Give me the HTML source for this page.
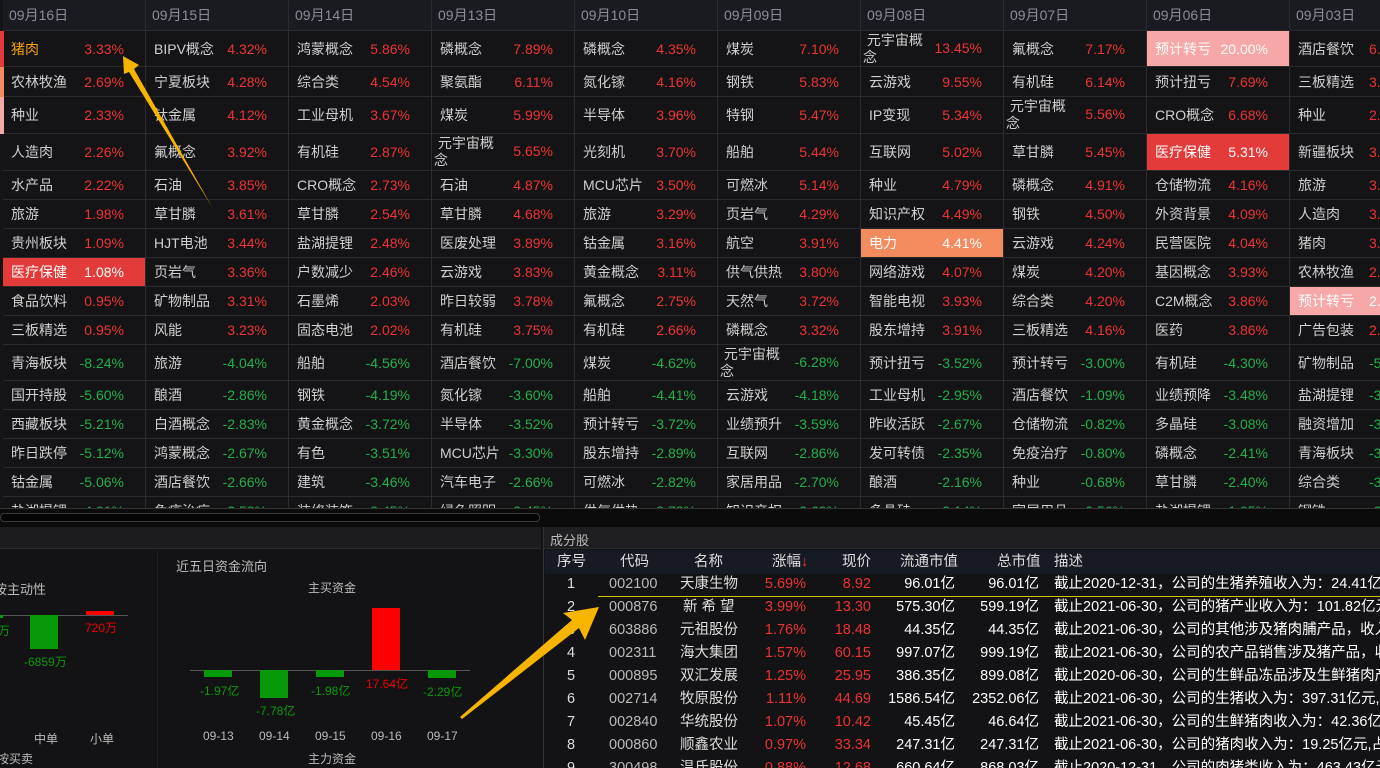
<!DOCTYPE html>
<html><head><meta charset="utf-8"><style>
*{margin:0;padding:0;box-sizing:border-box}
html{width:1380px;height:768px;overflow:hidden}
body{width:1380px;height:768px;overflow:hidden;background:#131215;font-family:"Liberation Sans","Noto Sans CJK SC",sans-serif;font-size:14px;color:#cfcfcf;position:relative}
#grid{position:absolute;left:0;top:0;width:1380px;height:508px;overflow:hidden;background:#141316}
.c{position:absolute;top:0;width:143px;border-right:1px solid #2c2c30}
.c>div{position:relative;border-bottom:1px solid #2a2a2e;display:flex;align-items:center;padding-left:8px;white-space:nowrap}
.c>div:nth-child(1){height:31px;background:#191b21;color:#8a8e96;font-size:14px;padding-left:6px}
.c>div:nth-child(2){height:36px}.c>div:nth-child(3){height:30px}.c>div:nth-child(4){height:37px}.c>div:nth-child(5){height:37px}
.c>div:nth-child(n+6){height:29px}.c>div:nth-child(12){height:36px}
.c>div b{font-weight:normal;position:absolute;right:21px;top:50%;transform:translateY(-50%)}
.c>div b.t{top:9px;transform:none}
.r b{color:#ee3434}.g b{color:#22b04a}
.tw{line-height:17px;align-items:flex-start!important;padding-top:1px;padding-left:2px!important}
.hr{background:#e33a3a;color:#fff}.hr b{color:#fff!important}
.ho{background:#f48b5f;color:#fff}.ho b{color:#fff!important}
.hp{background:#f6a7a7;color:#fff}.hp b{color:#fff!important}
#sb{position:absolute;left:0;top:508px;width:1380px;height:19px;background:#0b0b0c;border-top:1px solid #333}
#sb i{position:absolute;left:0;top:4px;width:540px;height:9px;border:1px solid #3a3a3a;border-radius:4px;background:#050505}
#lp{position:absolute;left:0;top:527px;width:541px;height:241px;background:#131214}
#lp .hd{height:22px;background:#1c1c1e;border-bottom:1px solid #2a2a2a}
#rp{position:absolute;left:543px;top:527px;width:837px;height:241px;background:#131214;border-left:1px solid #333;overflow:hidden}
#rp .hd{height:22px;background:#1f1f21;border-bottom:1px solid #2a2a2a;color:#bbb;font-size:13px;padding:3px 0 0 6px}
.t{position:absolute;white-space:nowrap}
.th{position:absolute;left:1px;top:23px;width:836px;height:24px;background:#161a22}
.rw{position:absolute;left:0;width:837px;height:23px;font-size:14.5px}
.rw span{position:absolute;top:0;line-height:23px;height:23px;white-space:nowrap}
</style></head><body>
<div id="grid">
<div class="c" style="left:0;width:146px;padding-left:3px">
<div>09月16日</div>
<div class="r" style="color:#f5a000">猪肉<b>3.33%</b></div>
<div class="r">农林牧渔<b>2.69%</b></div>
<div class="r">种业<b>2.33%</b></div>
<div class="r">人造肉<b>2.26%</b></div>
<div class="r">水产品<b>2.22%</b></div>
<div class="r">旅游<b>1.98%</b></div>
<div class="r">贵州板块<b>1.09%</b></div>
<div class="r hr">医疗保健<b>1.08%</b></div>
<div class="r">食品饮料<b>0.95%</b></div>
<div class="r">三板精选<b>0.95%</b></div>
<div class="g">青海板块<b>-8.24%</b></div>
<div class="g">国开持股<b>-5.60%</b></div>
<div class="g">西藏板块<b>-5.21%</b></div>
<div class="g">昨日跌停<b>-5.12%</b></div>
<div class="g">钴金属<b>-5.06%</b></div>
<div class="g">盐湖提锂<b>-4.91%</b></div>
</div>
<div style="position:absolute;left:0;top:31px;width:4px;height:36px;background:#e33a3a"></div>
<div style="position:absolute;left:0;top:67px;width:4px;height:30px;background:#f48b5f"></div>
<div style="position:absolute;left:0;top:97px;width:4px;height:37px;background:#f6a7a7"></div>
<div class="c" style="left:146px">
<div>09月15日</div>
<div class="r">BIPV概念<b>4.32%</b></div><div class="r">宁夏板块<b>4.28%</b></div><div class="r">钛金属<b>4.12%</b></div><div class="r">氟概念<b>3.92%</b></div><div class="r">石油<b>3.85%</b></div><div class="r">草甘膦<b>3.61%</b></div><div class="r">HJT电池<b>3.44%</b></div><div class="r">页岩气<b>3.36%</b></div><div class="r">矿物制品<b>3.31%</b></div><div class="r">风能<b>3.23%</b></div>
<div class="g">旅游<b>-4.04%</b></div><div class="g">酿酒<b>-2.86%</b></div><div class="g">白酒概念<b>-2.83%</b></div><div class="g">鸿蒙概念<b>-2.67%</b></div><div class="g">酒店餐饮<b>-2.66%</b></div><div class="g">免疫治疗<b>-2.58%</b></div>
</div>
<div class="c" style="left:289px">
<div>09月14日</div>
<div class="r">鸿蒙概念<b>5.86%</b></div><div class="r">综合类<b>4.54%</b></div><div class="r">工业母机<b>3.67%</b></div><div class="r">有机硅<b>2.87%</b></div><div class="r">CRO概念<b>2.73%</b></div><div class="r">草甘膦<b>2.54%</b></div><div class="r">盐湖提锂<b>2.48%</b></div><div class="r">户数减少<b>2.46%</b></div><div class="r">石墨烯<b>2.03%</b></div><div class="r">固态电池<b>2.02%</b></div>
<div class="g">船舶<b>-4.56%</b></div><div class="g">钢铁<b>-4.19%</b></div><div class="g">黄金概念<b>-3.72%</b></div><div class="g">有色<b>-3.51%</b></div><div class="g">建筑<b>-3.46%</b></div><div class="g">装修装饰<b>-3.45%</b></div>
</div>
<div class="c" style="left:432px">
<div>09月13日</div>
<div class="r">磷概念<b>7.89%</b></div><div class="r">聚氨酯<b>6.11%</b></div><div class="r">煤炭<b>5.99%</b></div><div class="r tw">&nbsp;元宇宙概<br>念<b class="t">5.65%</b></div><div class="r">石油<b>4.87%</b></div><div class="r">草甘膦<b>4.68%</b></div><div class="r">医废处理<b>3.89%</b></div><div class="r">云游戏<b>3.83%</b></div><div class="r">昨日较弱<b>3.78%</b></div><div class="r">有机硅<b>3.75%</b></div>
<div class="g">酒店餐饮<b>-7.00%</b></div><div class="g">氮化镓<b>-3.60%</b></div><div class="g">半导体<b>-3.52%</b></div><div class="g">MCU芯片<b>-3.30%</b></div><div class="g">汽车电子<b>-2.66%</b></div><div class="g">绿色照明<b>-2.45%</b></div>
</div>
<div class="c" style="left:575px">
<div>09月10日</div>
<div class="r">磷概念<b>4.35%</b></div><div class="r">氮化镓<b>4.16%</b></div><div class="r">半导体<b>3.96%</b></div><div class="r">光刻机<b>3.70%</b></div><div class="r">MCU芯片<b>3.50%</b></div><div class="r">旅游<b>3.29%</b></div><div class="r">钴金属<b>3.16%</b></div><div class="r">黄金概念<b>3.11%</b></div><div class="r">氟概念<b>2.75%</b></div><div class="r">有机硅<b>2.66%</b></div>
<div class="g">煤炭<b>-4.62%</b></div><div class="g">船舶<b>-4.41%</b></div><div class="g">预计转亏<b>-3.72%</b></div><div class="g">股东增持<b>-2.89%</b></div><div class="g">可燃冰<b>-2.82%</b></div><div class="g">供气供热<b>-2.78%</b></div>
</div>
<div class="c" style="left:718px">
<div>09月09日</div>
<div class="r">煤炭<b>7.10%</b></div><div class="r">钢铁<b>5.83%</b></div><div class="r">特钢<b>5.47%</b></div><div class="r">船舶<b>5.44%</b></div><div class="r">可燃冰<b>5.14%</b></div><div class="r">页岩气<b>4.29%</b></div><div class="r">航空<b>3.91%</b></div><div class="r">供气供热<b>3.80%</b></div><div class="r">天然气<b>3.72%</b></div><div class="r">磷概念<b>3.32%</b></div>
<div class="g tw">&nbsp;元宇宙概<br>念<b class="t">-6.28%</b></div><div class="g">云游戏<b>-4.18%</b></div><div class="g">业绩预升<b>-3.59%</b></div><div class="g">互联网<b>-2.86%</b></div><div class="g">家居用品<b>-2.70%</b></div><div class="g">知识产权<b>-2.69%</b></div>
</div>
<div class="c" style="left:861px">
<div>09月08日</div>
<div class="r tw">&nbsp;元宇宙概<br>念<b class="t">13.45%</b></div><div class="r">云游戏<b>9.55%</b></div><div class="r">IP变现<b>5.34%</b></div><div class="r">互联网<b>5.02%</b></div><div class="r">种业<b>4.79%</b></div><div class="r">知识产权<b>4.49%</b></div><div class="r ho">电力<b>4.41%</b></div><div class="r">网络游戏<b>4.07%</b></div><div class="r">智能电视<b>3.93%</b></div><div class="r">股东增持<b>3.91%</b></div>
<div class="g">预计扭亏<b>-3.52%</b></div><div class="g">工业母机<b>-2.95%</b></div><div class="g">昨收活跃<b>-2.67%</b></div><div class="g">发可转债<b>-2.35%</b></div><div class="g">酿酒<b>-2.16%</b></div><div class="g">多晶硅<b>-2.14%</b></div>
</div>
<div class="c" style="left:1004px">
<div>09月07日</div>
<div class="r">氟概念<b>7.17%</b></div><div class="r">有机硅<b>6.14%</b></div><div class="r tw">&nbsp;元宇宙概<br>念<b class="t">5.56%</b></div><div class="r">草甘膦<b>5.45%</b></div><div class="r">磷概念<b>4.91%</b></div><div class="r">钢铁<b>4.50%</b></div><div class="r">云游戏<b>4.24%</b></div><div class="r">煤炭<b>4.20%</b></div><div class="r">综合类<b>4.20%</b></div><div class="r">三板精选<b>4.16%</b></div>
<div class="g">预计转亏<b>-3.00%</b></div><div class="g">酒店餐饮<b>-1.09%</b></div><div class="g">仓储物流<b>-0.82%</b></div><div class="g">免疫治疗<b>-0.80%</b></div><div class="g">种业<b>-0.68%</b></div><div class="g">家居用品<b>-0.56%</b></div>
</div>
<div class="c" style="left:1147px">
<div>09月06日</div>
<div class="r hp">预计转亏<b>20.00%</b></div><div class="r">预计扭亏<b>7.69%</b></div><div class="r">CRO概念<b>6.68%</b></div><div class="r hr">医疗保健<b>5.31%</b></div><div class="r">仓储物流<b>4.16%</b></div><div class="r">外资背景<b>4.09%</b></div><div class="r">民营医院<b>4.04%</b></div><div class="r">基因概念<b>3.93%</b></div><div class="r">C2M概念<b>3.86%</b></div><div class="r">医药<b>3.86%</b></div>
<div class="g">有机硅<b>-4.30%</b></div><div class="g">业绩预降<b>-3.48%</b></div><div class="g">多晶硅<b>-3.08%</b></div><div class="g">磷概念<b>-2.41%</b></div><div class="g">草甘膦<b>-2.40%</b></div><div class="g">盐湖提锂<b>-1.95%</b></div>
</div>
<div class="c" style="left:1290px">
<div>09月03日</div>
<div class="r">酒店餐饮<b style="left:79px;right:auto">6.</b></div><div class="r">三板精选<b style="left:79px;right:auto">3.</b></div><div class="r">种业<b style="left:79px;right:auto">2.</b></div><div class="r">新疆板块<b style="left:79px;right:auto">3.</b></div><div class="r">旅游<b style="left:79px;right:auto">3.</b></div><div class="r">人造肉<b style="left:79px;right:auto">3.</b></div><div class="r">猪肉<b style="left:79px;right:auto">3.</b></div><div class="r">农林牧渔<b style="left:79px;right:auto">2.</b></div><div class="r hp">预计转亏<b style="left:79px;right:auto">2.</b></div><div class="r">广告包装<b style="left:79px;right:auto">2.</b></div>
<div class="g">矿物制品<b style="left:79px;right:auto">-5</b></div><div class="g">盐湖提锂<b style="left:79px;right:auto">-3</b></div><div class="g">融资增加<b style="left:79px;right:auto">-3</b></div><div class="g">青海板块<b style="left:79px;right:auto">-3</b></div><div class="g">综合类<b style="left:79px;right:auto">-3</b></div><div class="g">钢铁<b style="left:79px;right:auto">-2</b></div>
</div>
</div>
<div id="sb"><i></i></div>

<div id="lp"><div class="hd"></div>
<div style="position:absolute;left:157px;top:23px;width:1px;height:218px;background:#1f1f22"></div>
<div class="t" style="left:176px;top:29px;font-size:13px;color:#bbb">近五日资金流向</div>
<div class="t" style="left:-6px;top:52px;font-size:13px;color:#bbb">按主动性</div>
<div style="position:absolute;left:0;top:88px;width:128px;height:1px;background:#555"></div>
<div style="position:absolute;left:0;top:88px;width:3px;height:3px;background:#0a9a0a"></div>
<div style="position:absolute;left:30px;top:88px;width:28px;height:34px;background:#079907"></div>
<div style="position:absolute;left:86px;top:84px;width:28px;height:4px;background:#f00"></div>
<div class="t" style="left:-2px;top:95px;font-size:12px;color:#0a9a0a">万</div>
<div class="t" style="left:24px;top:126px;font-size:12px;color:#0a9a0a">-6859万</div>
<div class="t" style="left:85px;top:92px;font-size:12px;color:#e00">720万</div>
<div class="t" style="left:34px;top:203px;font-size:12px;color:#bbb">中单</div>
<div class="t" style="left:90px;top:203px;font-size:12px;color:#bbb">小单</div>
<div class="t" style="left:-3px;top:223px;font-size:12px;color:#bbb">按买卖</div>
<div class="t" style="left:308px;top:52px;font-size:12px;color:#bbb">主买资金</div>
<div style="position:absolute;left:190px;top:143px;width:280px;height:1px;background:#555"></div>
<div style="position:absolute;left:204px;top:143px;width:28px;height:7px;background:#079907"></div>
<div style="position:absolute;left:260px;top:143px;width:28px;height:28px;background:#079907"></div>
<div style="position:absolute;left:316px;top:143px;width:28px;height:7px;background:#079907"></div>
<div style="position:absolute;left:372px;top:81px;width:28px;height:62px;background:#f00"></div>
<div style="position:absolute;left:428px;top:143px;width:28px;height:8px;background:#079907"></div>
<div class="t" style="left:200px;top:155px;font-size:12px;color:#0a9a0a">-1.97亿</div>
<div class="t" style="left:256px;top:175px;font-size:12px;color:#0a9a0a">-7.78亿</div>
<div class="t" style="left:311px;top:155px;font-size:12px;color:#0a9a0a">-1.98亿</div>
<div class="t" style="left:366px;top:148px;font-size:12px;color:#e00">17.64亿</div>
<div class="t" style="left:423px;top:156px;font-size:12px;color:#0a9a0a">-2.29亿</div>
<div class="t" style="left:203px;top:202px;font-size:12px;color:#bbb">09-13</div>
<div class="t" style="left:259px;top:202px;font-size:12px;color:#bbb">09-14</div>
<div class="t" style="left:315px;top:202px;font-size:12px;color:#bbb">09-15</div>
<div class="t" style="left:371px;top:202px;font-size:12px;color:#bbb">09-16</div>
<div class="t" style="left:427px;top:202px;font-size:12px;color:#bbb">09-17</div>
<div class="t" style="left:308px;top:223px;font-size:12px;color:#bbb">主力资金</div>
</div>

<div id="rp"><div class="hd">成分股</div>
<div class="th"></div>
<div class="rw" style="top:24px;color:#ddd"><span style="left:13px">序号</span><span style="left:76px">代码</span><span style="left:150px">名称</span><span style="left:228px">涨幅<i style="font-style:normal;color:#e33">↓</i></span><span style="left:298px">现价</span><span style="left:356px">流通市值</span><span style="left:453px">总市值</span><span style="left:510px">描述</span></div>
<div style="position:absolute;left:54px;top:69px;width:783px;height:1px;background:#cfc400"></div>
<div class="rw" style="top:46px"><span style="left:23px;color:#ddd">1</span><span style="left:65px;color:#bbb">002100</span><span style="left:136px;color:#ddd">天康生物</span><span style="right:575px;color:#e33">5.69%</span><span style="right:510px;color:#e33">8.92</span><span style="right:426px;color:#fff">96.01亿</span><span style="right:342px;color:#fff">96.01亿</span><span style="left:510px;color:#fff">截止2020-12-31，公司的生猪养殖收入为：24.41亿元</span></div>
<div class="rw" style="top:69px"><span style="left:23px;color:#ddd">2</span><span style="left:65px;color:#bbb">000876</span><span style="left:139px;color:#ddd">新 希 望</span><span style="right:575px;color:#e33">3.99%</span><span style="right:510px;color:#e33">13.30</span><span style="right:426px;color:#fff">575.30亿</span><span style="right:342px;color:#fff">599.19亿</span><span style="left:510px;color:#fff">截止2021-06-30，公司的猪产业收入为：101.82亿元</span></div>
<div class="rw" style="top:92px"><span style="left:23px;color:#ddd">3</span><span style="left:65px;color:#bbb">603886</span><span style="left:136px;color:#ddd">元祖股份</span><span style="right:575px;color:#e33">1.76%</span><span style="right:510px;color:#e33">18.48</span><span style="right:426px;color:#fff">44.35亿</span><span style="right:342px;color:#fff">44.35亿</span><span style="left:510px;color:#fff">截止2021-06-30，公司的其他涉及猪肉脯产品，收入</span></div>
<div class="rw" style="top:115px"><span style="left:23px;color:#ddd">4</span><span style="left:65px;color:#bbb">002311</span><span style="left:136px;color:#ddd">海大集团</span><span style="right:575px;color:#e33">1.57%</span><span style="right:510px;color:#e33">60.15</span><span style="right:426px;color:#fff">997.07亿</span><span style="right:342px;color:#fff">999.19亿</span><span style="left:510px;color:#fff">截止2021-06-30，公司的农产品销售涉及猪产品，收</span></div>
<div class="rw" style="top:138px"><span style="left:23px;color:#ddd">5</span><span style="left:65px;color:#bbb">000895</span><span style="left:136px;color:#ddd">双汇发展</span><span style="right:575px;color:#e33">1.25%</span><span style="right:510px;color:#e33">25.95</span><span style="right:426px;color:#fff">386.35亿</span><span style="right:342px;color:#fff">899.08亿</span><span style="left:510px;color:#fff">截止2020-06-30，公司的生鲜品冻品涉及生鲜猪肉产</span></div>
<div class="rw" style="top:161px"><span style="left:23px;color:#ddd">6</span><span style="left:65px;color:#bbb">002714</span><span style="left:136px;color:#ddd">牧原股份</span><span style="right:575px;color:#e33">1.11%</span><span style="right:510px;color:#e33">44.69</span><span style="right:426px;color:#fff">1586.54亿</span><span style="right:342px;color:#fff">2352.06亿</span><span style="left:510px;color:#fff">截止2021-06-30，公司的生猪收入为：397.31亿元,占</span></div>
<div class="rw" style="top:184px"><span style="left:23px;color:#ddd">7</span><span style="left:65px;color:#bbb">002840</span><span style="left:136px;color:#ddd">华统股份</span><span style="right:575px;color:#e33">1.07%</span><span style="right:510px;color:#e33">10.42</span><span style="right:426px;color:#fff">45.45亿</span><span style="right:342px;color:#fff">46.64亿</span><span style="left:510px;color:#fff">截止2021-06-30，公司的生鲜猪肉收入为：42.36亿元</span></div>
<div class="rw" style="top:207px"><span style="left:23px;color:#ddd">8</span><span style="left:65px;color:#bbb">000860</span><span style="left:136px;color:#ddd">顺鑫农业</span><span style="right:575px;color:#e33">0.97%</span><span style="right:510px;color:#e33">33.34</span><span style="right:426px;color:#fff">247.31亿</span><span style="right:342px;color:#fff">247.31亿</span><span style="left:510px;color:#fff">截止2021-06-30，公司的猪肉收入为：19.25亿元,占</span></div>
<div class="rw" style="top:230px"><span style="left:23px;color:#ddd">9</span><span style="left:65px;color:#bbb">300498</span><span style="left:136px;color:#ddd">温氏股份</span><span style="right:575px;color:#e33">0.88%</span><span style="right:510px;color:#e33">12.68</span><span style="right:426px;color:#fff">660.64亿</span><span style="right:342px;color:#fff">868.03亿</span><span style="left:510px;color:#fff">截止2020-12-31，公司的肉猪类收入为：463.43亿元</span></div>
</div>

<svg width="1380" height="768" style="position:absolute;left:0;top:0">
<polygon points="123,56 139,65 134,69 212,207 129,72 124,74" fill="#f7b500"/>
<polygon points="599,607 585,640 579,628 462,719 460,717 572,620 563,613" fill="#f7b500"/>
</svg>
</body></html>
